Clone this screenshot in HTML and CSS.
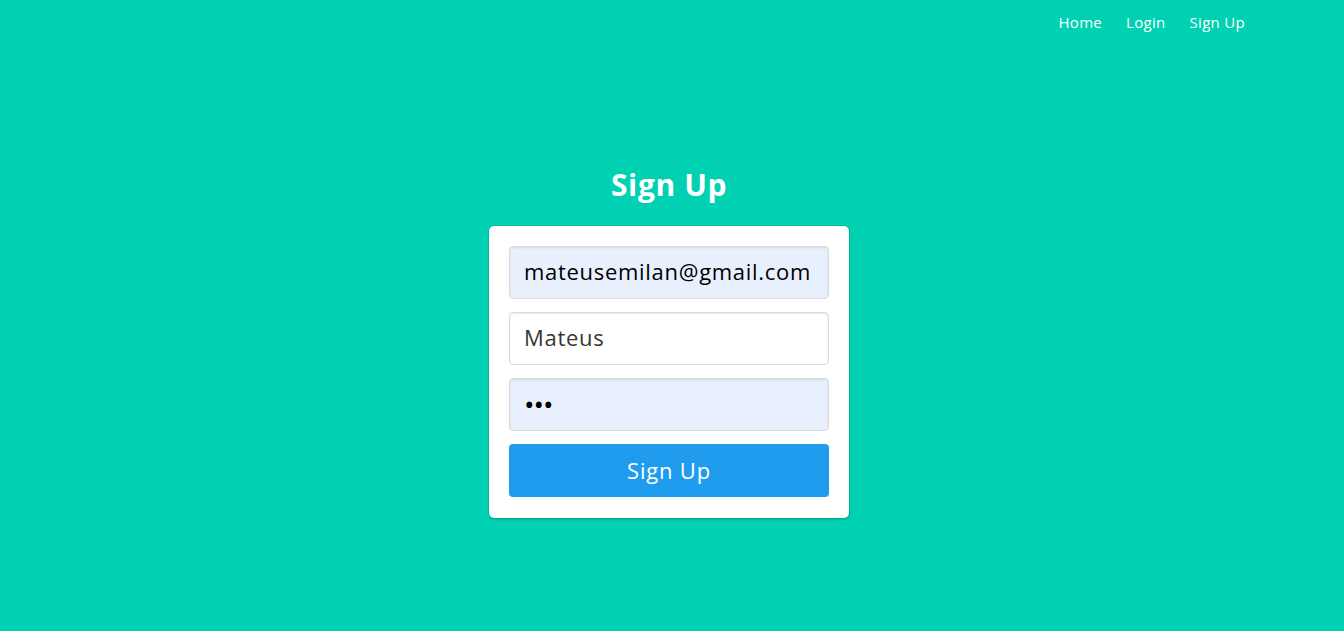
FILE: index.html
```html
<!DOCTYPE html>
<html lang="en">
<head>
<meta charset="utf-8">
<title>Sign Up</title>
<link rel="stylesheet" href="styles.css">
</head>
<body>
<nav class="navbar">
  <a class="nav-item" href="#">Home</a>
  <a class="nav-item" href="#">Login</a>
  <a class="nav-item" href="#">Sign Up</a>
</nav>
<main class="main">
  <h1 class="title">Sign Up</h1>
  <form class="card">
    <input class="input autofill" type="email" value="mateusemilan@gmail.com">
    <input class="input" type="text" value="Mateus">
    <input class="input autofill password" type="password" value="abc">
    <button class="button" type="button">Sign Up</button>
  </form>
</main>
</body>
</html>
```

FILE: styles.css
```css
* { box-sizing: border-box; }
html, body { margin: 0; padding: 0; }
body {
  background: #00d1b2;
  min-height: 100vh;
  font-family: "Open Sans", "Noto Sans", sans-serif;
}
.navbar {
  display: flex;
  justify-content: flex-end;
  height: 44px;
  align-items: center;
  padding-right: 87px;
}
.nav-item {
  color: #fff;
  text-decoration: none;
  font-size: 15px;
  letter-spacing: 0.3px;
  padding: 0 12px;
  line-height: 24px;
}
.main {
  display: flex;
  flex-direction: column;
  align-items: center;
  padding-top: 124px;
  padding-right: 6px;
}
.title {
  margin: 0 0 24px;
  color: #fff;
  font-size: 30px;
  letter-spacing: 0.6px;
  font-weight: 700;
  line-height: 34px;
}
.card {
  width: 360px;
  background: #fff;
  border-radius: 5px;
  padding: 20px 20px 21px;
  display: flex;
  flex-direction: column;
  gap: 13px;
  box-shadow: 0 2px 3px rgba(10,10,10,0.1), 0 0 0 1px rgba(10,10,10,0.1);
}
.input {
  width: 100%;
  height: 53px;
  border: 1px solid #dbdbdb;
  border-radius: 4px;
  background: #fff;
  padding: 0 14px 3px;
  font-family: inherit;
  font-size: 22px;
  letter-spacing: 0.7px;
  color: #363636;
  box-shadow: inset 0 1px 2px rgba(10,10,10,0.1);
  outline: none;
}
.input.autofill { background: #e8f0fe; color: #000; }
.input.password { font-size: 28px; letter-spacing: -1px; padding-bottom: 2px; }
.button {
  height: 53px;
  border: none;
  border-radius: 4px;
  background: #209cee;
  color: #fff;
  font-family: inherit;
  font-size: 22px;
  letter-spacing: 0.8px;
  padding-bottom: 3px;
  cursor: pointer;
}
```
